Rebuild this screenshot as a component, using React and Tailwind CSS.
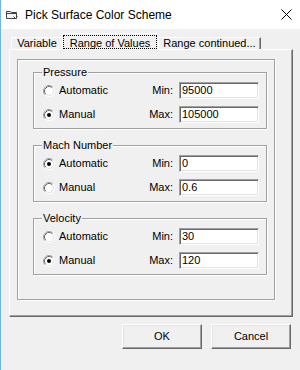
import React from "react";

function Radio({ checked }) {
  return (
    <svg width="12" height="12" viewBox="0 0 12 12" className="shrink-0">
      <circle cx="6" cy="6" r="5" fill="#fff" />
      <path d="M2.11 9.89 A5.5 5.5 0 0 1 9.89 2.11" fill="none" stroke="#a0a0a0" />
      <path d="M9.89 2.11 A5.5 5.5 0 0 1 2.11 9.89" fill="none" stroke="#ffffff" />
      <path d="M2.82 9.18 A4.5 4.5 0 0 1 9.18 2.82" fill="none" stroke="#696969" />
      <path d="M9.18 2.82 A4.5 4.5 0 0 1 2.82 9.18" fill="none" stroke="#e3e3e3" />
      {checked && <circle cx="6" cy="6" r="2" fill="#000" />}
    </svg>
  );
}

function Field({ value }) {
  return (
    <div className="ml-[6px] w-[80px] h-[17px] bg-white border border-t-[#a0a0a0] border-l-[#a0a0a0] border-r-white border-b-white shadow-[inset_1px_1px_0_#696969,inset_-1px_-1px_0_#e3e3e3] pl-[2px] flex items-center leading-[13px]">
      {value}
    </div>
  );
}

function Row({ label, checked, name, value }) {
  return (
    <div className="h-[17px] flex items-center">
      <div className="flex-1 flex items-center">
        <Radio checked={checked} />
        <span className="ml-[4px]">{label}</span>
      </div>
      <span className="font-normal">{name}</span>
      <Field value={value} />
    </div>
  );
}

function Group({ title, auto, min, max }) {
  return (
    <div className="relative w-[234px] h-[57px] border border-[#a0a0a0] shadow-[inset_1px_1px_0_#fff,1px_1px_0_#fff] pt-[9px] pl-[9px] pr-[7px] flex flex-col gap-[7px]">
      <span className="absolute left-[8px] top-[-7px] px-[1px] bg-[#f0f0f0] leading-[13px]">
        {title}
      </span>
      <Row label="Automatic" checked={auto} name="Min:" value={min} />
      <Row label="Manual" checked={!auto} name="Max:" value={max} />
    </div>
  );
}

function Button({ children }) {
  return (
    <button className="w-[80px] h-[25px] bg-[#f0f0f0] font-normal border border-t-white border-l-white border-r-[#696969] border-b-[#696969] shadow-[inset_-1px_-1px_0_#a0a0a0,inset_1px_1px_0_#e3e3e3] flex items-center justify-center">
      {children}
    </button>
  );
}

export default function App() {
  return (
    <div className="w-[300px] h-[370px] flex bg-[#f0f0f0] text-black text-[11px] font-normal font-['Liberation_Sans',Arial,sans-serif]">
      <div className="w-px bg-[#6fb5e6]" />
      <div className="flex-1 flex flex-col">
        {/* Title bar */}
        <div className="h-[29px] bg-white flex items-center pl-[5px] pr-[8px]">
          <svg width="12" height="10" viewBox="0 0 12 10" className="shrink-0">
            <path d="M0.5 1.5 H4.5 L5.5 2.5 H10.5 V8.5 H0.5 Z" fill="#f4f4f4" stroke="#404040" />
            <path d="M0.5 3.5 H10.5" stroke="#404040" />
            <path d="M7.5 6.5 L9.5 8.5 L11.5 6.5" fill="none" stroke="#404040" />
          </svg>
          <span className="ml-[7px] text-[12px] flex-1">Pick Surface Color Scheme</span>
          <svg width="11" height="11" viewBox="0 0 11 11">
            <path d="M0.5 0.5 L10.5 10.5 M10.5 0.5 L0.5 10.5" stroke="#000" strokeWidth="1" />
          </svg>
        </div>

        {/* Tabs */}
        <div className="mt-[4px] h-[16px] ml-[10px] flex items-end">
          <div className="w-[51px] h-[12px] border-l border-t border-white flex items-center justify-center leading-[11px]">
            Variable
          </div>
          <div className="relative z-10 w-[96px] h-[17px] -mb-px bg-[#f0f0f0] border-l border-t border-white pt-[1px] pr-[1px]">
            <div className="h-[14px] border border-dotted border-black flex items-center justify-center leading-[12px] pt-[1px]">
              Range of Values
            </div>
          </div>
          <div className="w-[103px] h-[12px] border-l border-t border-white border-r border-r-[#696969] shadow-[inset_-1px_0_0_#a0a0a0] flex items-center justify-center leading-[11px]">
            Range continued...
          </div>
        </div>

        {/* Tab panel */}
        <div className="ml-[8px] w-[284px] h-[268px] border border-t-white border-l-white border-r-[#696969] border-b-[#696969] shadow-[inset_-1px_-1px_0_#a0a0a0] pt-[9px] pl-[7px]">
          <div className="w-[258px] h-[241px] border border-[#a0a0a0] shadow-[inset_1px_1px_0_#fff,1px_1px_0_#fff] pt-[12px] pl-[15px] flex flex-col gap-[16px]">
            <Group title="Pressure" auto={false} min="95000" max="105000" />
            <Group title="Mach Number" auto={true} min="0" max="0.6" />
            <Group title="Velocity" auto={false} min="30" max="120" />
          </div>
        </div>

        {/* Buttons */}
        <div className="mt-[7px] mr-[9px] flex justify-end gap-[9px]">
          <Button>OK</Button>
          <Button>Cancel</Button>
        </div>
      </div>
    </div>
  );
}
